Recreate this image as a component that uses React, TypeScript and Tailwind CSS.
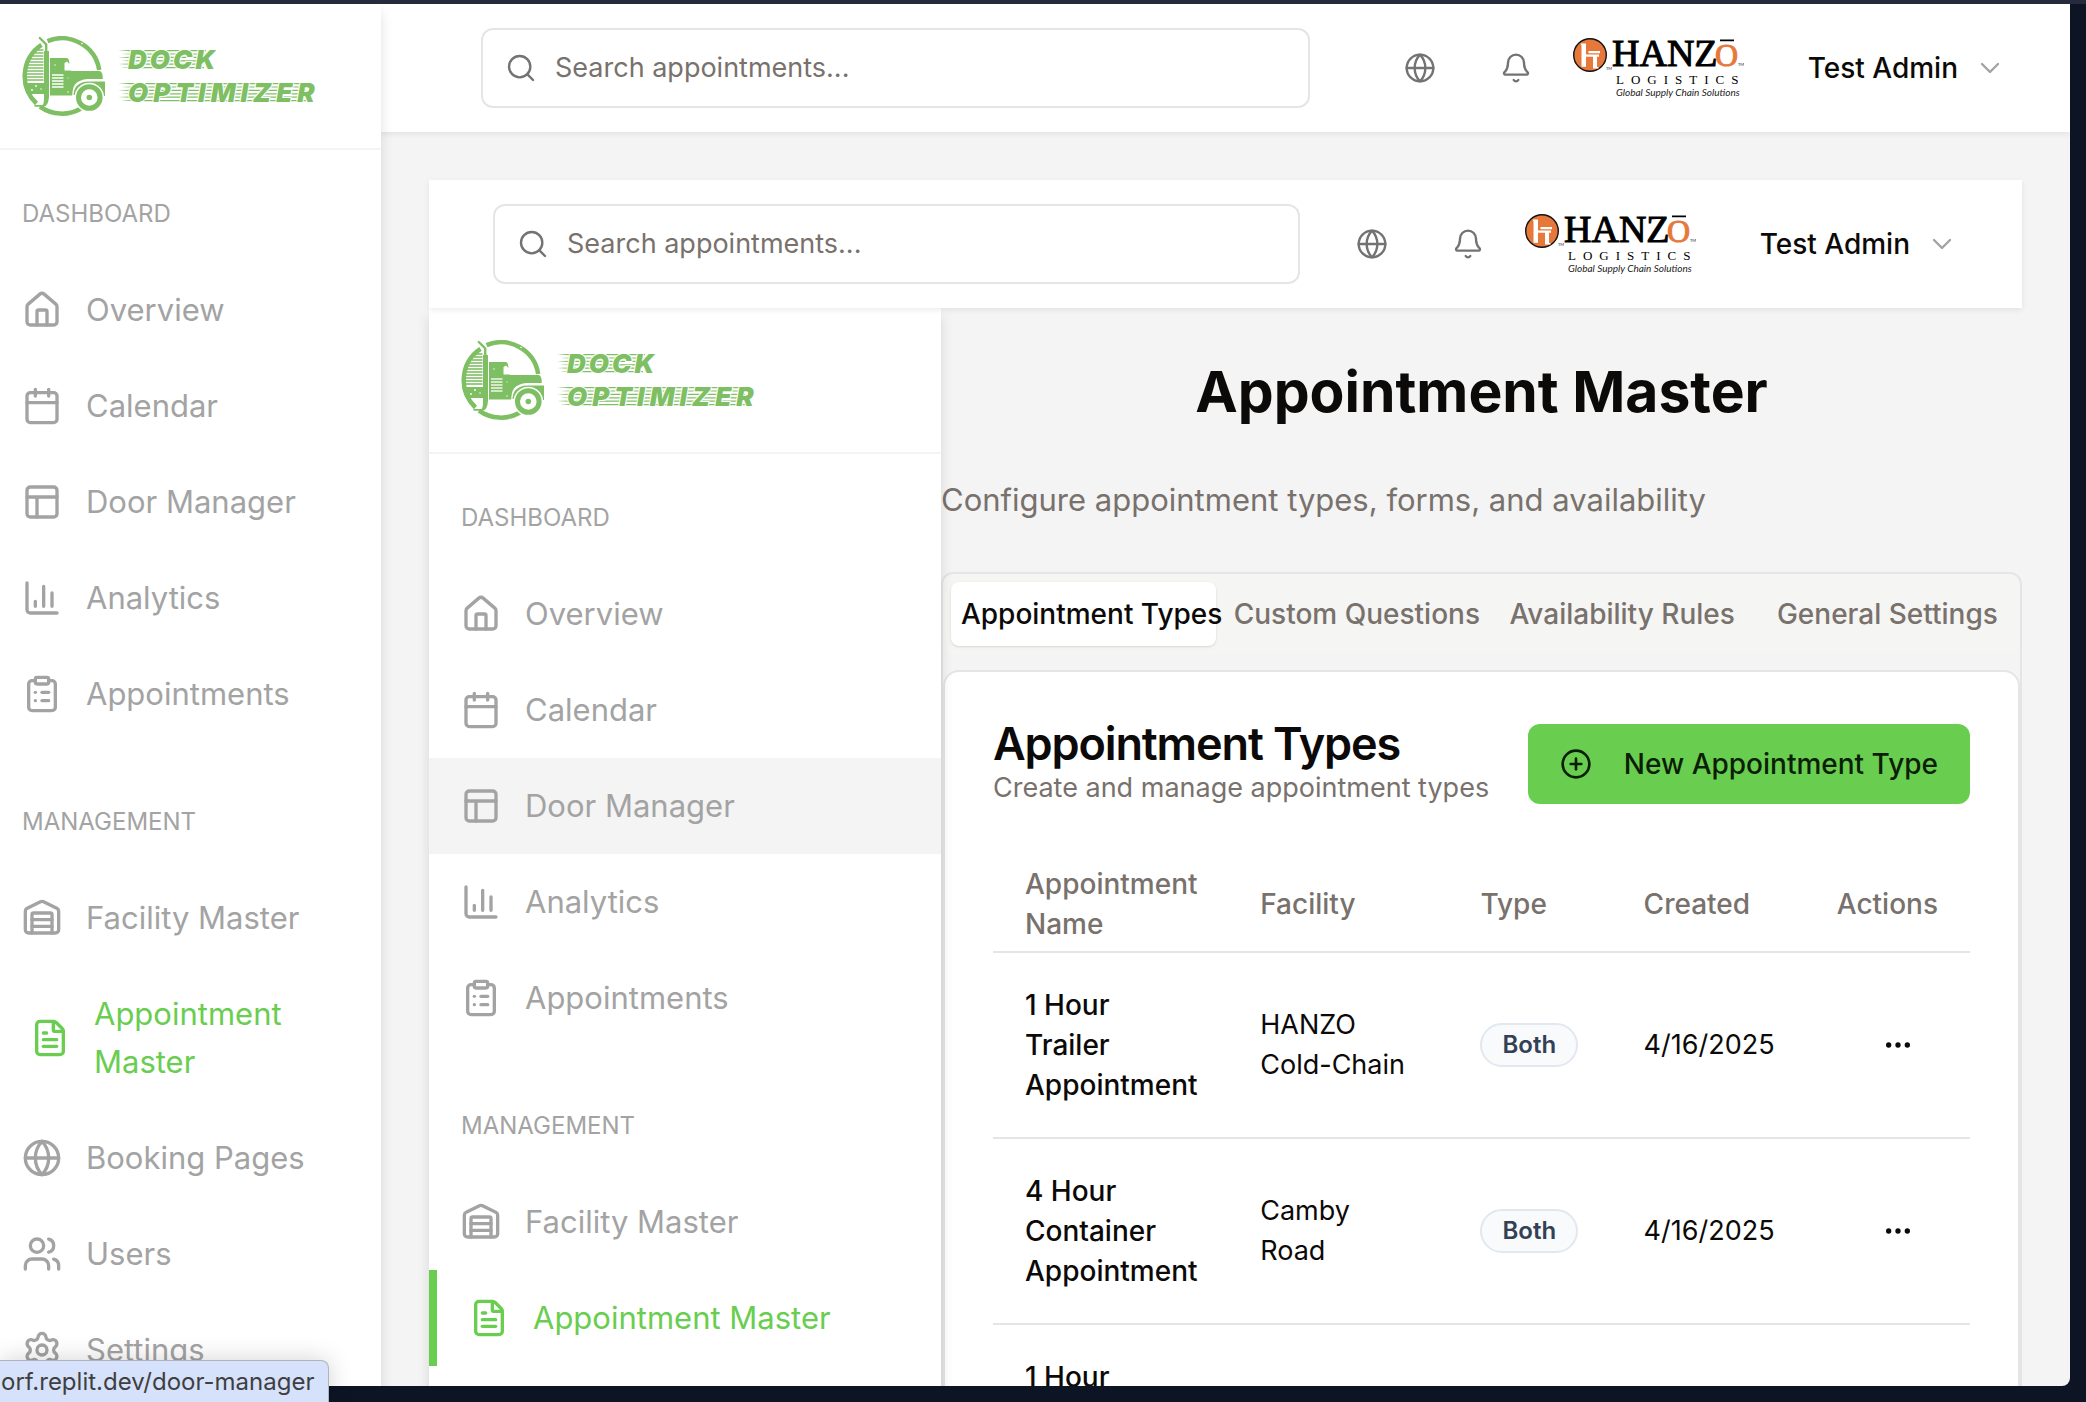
import React from "react";
import {
  Bell,
  ChevronDown,
  CirclePlus,
  ClipboardList,
  Ellipsis,
  FileText,
  Globe,
  Search,
  Settings,
  Users,
  Warehouse,
  type LucideIcon,
} from "lucide-react";

type IconProps = { className?: string };

const strokeProps = {
  viewBox: "0 0 24 24",
  fill: "none",
  stroke: "currentColor",
  strokeWidth: 2,
  strokeLinecap: "round" as const,
  strokeLinejoin: "round" as const,
  "aria-hidden": true,
};

function HomeIcon({ className }: IconProps) {
  return (
    <svg {...strokeProps} className={className}>
      <path d="M15 21v-8a1 1 0 0 0-1-1h-4a1 1 0 0 0-1 1v8" />
      <path d="M3 10a2 2 0 0 1 .709-1.528l7-5.999a2 2 0 0 1 2.582 0l7 5.999A2 2 0 0 1 21 10v9a2 2 0 0 1-2 2H5a2 2 0 0 1-2-2z" />
    </svg>
  );
}

function CalendarIcon({ className }: IconProps) {
  return (
    <svg {...strokeProps} className={className}>
      <path d="M8 2v4M16 2v4M3 10h18" />
      <rect x="3" y="4" width="18" height="18" rx="2" />
    </svg>
  );
}

function LayoutIcon({ className }: IconProps) {
  return (
    <svg {...strokeProps} className={className}>
      <rect x="3" y="3" width="18" height="18" rx="2" />
      <path d="M3 9h18M9 21V9" />
    </svg>
  );
}

function AnalyticsIcon({ className }: IconProps) {
  return (
    <svg {...strokeProps} className={className}>
      <path d="M3 3v16a2 2 0 0 0 2 2h16M18 17V9M13 17V5M8 17v-3" />
    </svg>
  );
}

const stripeRows = [14, 17, 20, 23, 26, 29, 32, 35, 38, 41, 44];
const ventRows = [39, 42, 45, 48, 51];

function SpeedLines({ x, y, width }: { x: number; y: number; width: number }) {
  return (
    <g fill="#7fbf63">
      {[0, 1, 2, 3, 4, 5].map((i) => (
        <path
          key={i}
          d={`M${x + (i % 2) * 3} ${y + i * 3.4 + 0.5} l12 -.5 h${width - i - 12} v1.2 h-${width - i - 12} z`}
        />
      ))}
    </g>
  );
}

function DockLogo() {
  return (
    <svg
      viewBox="0 0 296 80"
      role="img"
      aria-label="Dock Optimizer"
      className="h-20 w-[296px] shrink-0"
    >
      <g fill="none" stroke="#7fbf63" strokeWidth="4.5">
        <path d="M25.5 5.2A37.7 37.7 0 0 1 77.2 34" />
        <path d="M19.5 8.8A37.7 37.7 0 0 0 14.5 67.5" />
        <path d="M18 70.6A37.7 37.7 0 0 0 59 72.5" />
      </g>
      <g stroke="#7fbf63" strokeWidth="1.6">
        {stripeRows.map((y) => (
          <path key={y} d={`M${Math.max(4, 15 - (y - 14) * 0.7)} ${y}H21.5`} />
        ))}
      </g>
      <path d="M3 47h23v11H7z" fill="#7fbf63" />
      <path
        d="M17.8 2l6.4 6.4V16"
        fill="none"
        stroke="#7fbf63"
        strokeWidth="2.4"
        strokeLinecap="round"
      />
      <path d="M22 15h5v46q-.6 9-5.500 9.800H12.500v-1.800h8Q22 68 22 61z" fill="#7fbf63" />
      <path
        d="M28 22h17q2 0 2.500 6l-2.500-2.500-2.500 1.500V34.500H49V35h29q2.800 1 2.800 8H66q-9 .5-13 5.500-2.500 3.500-2.800 11H28z"
        fill="#7fbf63"
      />
      <path
        d="M51.500 59q.5-13 15-13.500H83V60h-1.600q-1.400-11.500-14-11.700-12 .7-13.400 10.700z"
        fill="#7fbf63"
      />
      <g stroke="#fff" strokeWidth="1.300">
        {ventRows.map((y) => (
          <path key={y} d={`M30 ${y}H41.500`} />
        ))}
      </g>
      <circle cx="67.300" cy="61.500" r="14.800" fill="#fff" />
      <circle cx="67.300" cy="61.500" r="10.800" fill="none" stroke="#7fbf63" strokeWidth="5" />
      <circle cx="67.300" cy="61.500" r="2.800" fill="#7fbf63" />
      <g fill="#fff">
        <circle cx="14" cy="50" r=".9" />
        <circle cx="10" cy="54" r=".9" />
        <circle cx="19" cy="53" r=".7" />
        <circle cx="33" cy="29" r=".7" />
        <circle cx="46" cy="42" r=".6" />
        <circle cx="60" cy="7.500" r=".8" />
        <circle cx="46" cy="56" r=".7" />
      </g>
      <SpeedLines x={96} y={14} width={88} />
      <SpeedLines x={96} y={47} width={190} />
      <g
        fontFamily="Inter, sans-serif"
        fontSize="26"
        fontWeight="900"
        fontStyle="italic"
        fill="#7fbf63"
        stroke="#fff"
        strokeWidth="2"
        paintOrder="stroke"
      >
        <text x="106" y="33" letterSpacing="3">DOCK</text>
        <text x="106" y="66" letterSpacing="5">OPTIMIZER</text>
      </g>
    </svg>
  );
}

function HanzoLogo() {
  return (
    <svg
      viewBox="0 0 176 64"
      role="img"
      aria-label="Hanzo Logistics, Global Supply Chain Solutions"
      className="h-16 w-44 shrink-0"
    >
      <circle cx="18" cy="19" r="16.300" fill="#e5783a" stroke="#111" strokeWidth="1.400" />
      <path d="M8.500 7.500h5.500v11h13v2.200h-2V31h1.500v1.500h-5.500V20.700H14v10H9.500V9.500z" fill="#fff" />
      <path d="M16.500 15h11.500v2.200H16.500z" fill="#fff" />
      <g fontFamily="'Liberation Serif', serif">
        <text x="40" y="30" fontSize="38" fill="#000" stroke="#000" strokeWidth="1">
          HANZ
        </text>
        <text x="143" y="30" fontSize="32" fill="#e5783a" stroke="#e5783a" strokeWidth="1">
          O
        </text>
        <text x="44" y="48" fontSize="13" letterSpacing="7" fill="#000">
          LOGISTICS
        </text>
      </g>
      <path d="M148 3.500h14v1.800h-14z" fill="#000" />
      <g fontFamily="Lato, sans-serif" fill="#222">
        <text x="44" y="60" fontSize="10" fontStyle="italic">
          Global Supply Chain Solutions
        </text>
        <text x="34" y="34" fontSize="4">TM</text>
        <text x="166" y="30" fontSize="4">TM</text>
      </g>
    </svg>
  );
}

type NavItem = {
  label: string;
  icon: LucideIcon | ((p: IconProps) => React.ReactElement);
  active?: boolean;
};

const dashboardItems: NavItem[] = [
  { label: "Overview", icon: HomeIcon },
  { label: "Calendar", icon: CalendarIcon },
  { label: "Door Manager", icon: LayoutIcon },
  { label: "Analytics", icon: AnalyticsIcon },
  { label: "Appointments", icon: ClipboardList },
];

const managementItems: NavItem[] = [
  { label: "Facility Master", icon: Warehouse },
  { label: "Appointment Master", icon: FileText, active: true },
  { label: "Booking Pages", icon: Globe },
  { label: "Users", icon: Users },
  { label: "Settings", icon: Settings },
];

function NavSection({
  title,
  items,
  inset,
  hovered,
}: {
  title: string;
  items: NavItem[];
  inset: boolean;
  hovered?: string;
}) {
  const pad = inset ? "pl-8" : "pl-[22px]";
  return (
    <section className="mb-12">
      <h2 className={`${pad} py-4 text-2xl leading-8 text-[#a3a3a3]`}>{title}</h2>
      <ul className="mt-4">
        {items.map(({ label, icon: Icon, active }) => (
          <li key={label}>
            <a
              href="#"
              className={`flex min-h-24 items-center gap-6 py-6 pr-8 text-[31px] leading-[48px] ${pad} ${
                active
                  ? inset
                    ? "border-l-8 border-[#69cd50] text-[#69cd50]"
                    : "ml-2 text-[#69cd50]"
                  : "text-[#a3a3a3]"
              } ${hovered === label ? "bg-[#f4f4f4]" : ""}`}
            >
              <Icon className="size-10 shrink-0" />
              <span>{label}</span>
            </a>
          </li>
        ))}
      </ul>
    </section>
  );
}

function Sidebar({ inset = false, hovered }: { inset?: boolean; hovered?: string }) {
  return (
    <aside
      className={`relative z-10 shrink-0 bg-white shadow-[0_8px_12px_rgba(0,0,0,0.12)] ${
        inset ? "w-[512px]" : "w-[381px]"
      }`}
    >
      <div
        className={`flex items-center border-b-2 border-[#f4f4f4] py-8 ${
          inset ? "pl-8" : "pl-[22px]"
        }`}
      >
        <DockLogo />
      </div>
      <nav aria-label={inset ? "Page" : "Main"} className="pt-8">
        <NavSection title="DASHBOARD" items={dashboardItems} inset={inset} hovered={hovered} />
        <NavSection title="MANAGEMENT" items={managementItems} inset={inset} />
      </nav>
    </aside>
  );
}

function TopBar({ inset = false }: { inset?: boolean }) {
  return (
    <header
      className={`relative flex items-center bg-white py-6 pr-16 shadow-[0_2px_6px_rgba(0,0,0,0.08)] ${
        inset ? "z-20 pl-16" : "pl-[100px]"
      }`}
    >
      <label
        className={`flex h-20 flex-1 items-center gap-[18px] rounded-xl border-2 border-[#e5e5e5] pl-[22px] text-[#737373] ${
          inset ? "mr-8" : "mr-[70px]"
        }`}
      >
        <Search className="size-8" strokeWidth={1.8} />
        <input
          type="search"
          aria-label="Search appointments"
          placeholder="Search appointments..."
          className="min-w-0 flex-1 bg-transparent text-[27px] leading-10 outline-none placeholder:text-[#78716c]"
        />
      </label>
      <div className="flex items-center">
        <button aria-label="Language" className="grid size-20 place-items-center text-[#737373]">
          <Globe className="size-8" strokeWidth={1.8} />
        </button>
        <button aria-label="Notifications" className="ml-4 grid size-20 place-items-center text-[#737373]">
          <Bell className="size-8" strokeWidth={1.8} />
        </button>
        <div className="ml-4">
          <HanzoLogo />
        </div>
        <button className="ml-[60px] flex items-center gap-4 text-[28px] leading-10 font-medium text-[#0c0a09]">
          Test Admin
          <ChevronDown className="size-8 text-[#a3a3a3]" strokeWidth={1.8} />
        </button>
      </div>
    </header>
  );
}

const tabs = ["Appointment Types", "Custom Questions", "Availability Rules", "General Settings"];

const rows = [
  { name: "1 Hour Trailer Appointment", facility: "HANZO Cold-Chain", type: "Both", created: "4/16/2025" },
  { name: "4 Hour Container Appointment", facility: "Camby Road", type: "Both", created: "4/16/2025" },
  { name: "1 Hour Container Appointment", facility: "Camby Road", type: "Both", created: "4/16/2025" },
];

function AppointmentTable() {
  return (
    <table className="mt-12 w-full table-fixed border-collapse text-left text-[27px] leading-10">
      <colgroup>
        <col className="w-[235px]" />
        <col className="w-[220px]" />
        <col className="w-[163px]" />
        <col className="w-[195px]" />
        <col className="w-[163px]" />
      </colgroup>
      <thead>
        <tr className="h-24 border-b-2 border-[#e5e5e5] text-[28px] text-[#78716c]">
          <th className="px-8 font-medium">Appointment Name</th>
          <th className="px-8 font-medium">Facility</th>
          <th className="px-8 font-medium">Type</th>
          <th className="px-8 font-medium">Created</th>
          <th className="pr-8 text-right font-medium">Actions</th>
        </tr>
      </thead>
      <tbody>
        {rows.map((r, i) => (
          <tr key={i} className="border-b-2 border-[#e5e5e5]">
            <td className="p-8 text-[28px] font-medium">{r.name}</td>
            <td className="p-8">{r.facility}</td>
            <td className="p-8">
              <span className="inline-flex rounded-full border-2 border-[#e2e8f0] bg-[#f8fafc] px-5 py-1 align-middle text-2xl leading-8 font-semibold text-[#334155]">
                {r.type}
              </span>
            </td>
            <td className="py-8 pl-8">{r.created}</td>
            <td className="p-8">
              <button
                aria-label={`Actions for ${r.name}`}
                className="ml-auto grid size-20 place-items-center"
              >
                <Ellipsis className="size-8" />
              </button>
            </td>
          </tr>
        ))}
      </tbody>
    </table>
  );
}

function AppointmentMaster() {
  return (
    <main className="min-w-0 flex-1 pt-12">
      <h1 className="text-center text-[57px] leading-[72px] font-bold">Appointment Master</h1>
      <p className="mt-12 text-[31px] leading-[48px] text-[#78716c]">
        Configure appointment types, forms, and availability
      </p>
      <div className="mt-12 rounded-xl border-2 border-[#e5e5e5]">
        <div role="tablist" className="flex h-20 rounded-xl bg-[#f5f5f4] p-2">
          {tabs.map((tab, i) => (
            <button
              key={tab}
              role="tab"
              aria-selected={i === 0}
              className={`flex w-0 flex-1 items-center justify-center rounded-lg pl-4 text-[28px] leading-10 font-medium whitespace-nowrap ${
                i === 0 ? "bg-white text-[#0c0a09] shadow-sm" : "text-[#78716c]"
              }`}
            >
              {tab}
            </button>
          ))}
        </div>
        <section className="mt-4 rounded-2xl border-2 border-[#e5e5e5] bg-white p-12">
          <div className="flex items-center justify-between">
            <div>
              <h2 className="text-[45px] leading-[48px] font-semibold tracking-tight">Appointment Types</h2>
              <p className="text-[27px] leading-10 text-[#78716c]">
                Create and manage appointment types
              </p>
            </div>
            <button className="flex h-20 items-center gap-8 rounded-xl bg-[#69cd50] px-8 text-[28px] leading-10 font-medium whitespace-nowrap text-[#0b1f05]">
              <CirclePlus className="size-8" />
              New Appointment Type
            </button>
          </div>
          <AppointmentTable />
        </section>
      </div>
    </main>
  );
}

export default function App() {
  return (
    <div className="relative h-screen overflow-hidden border-t-4 border-[#252a3c] bg-[#0d1424] pr-4 pb-4 font-['Inter',sans-serif] text-[#0c0a09]">
      <div className="flex h-full overflow-hidden rounded-br-lg bg-[#f4f4f4]">
        <Sidebar />
        <div className="flex min-w-0 flex-1 flex-col">
          <TopBar />
          <div className="p-12">
            <TopBar inset />
            <div className="flex">
              <Sidebar inset hovered="Door Manager" />
              <AppointmentMaster />
            </div>
          </div>
        </div>
      </div>
      <div className="absolute bottom-0 left-0 z-30 rounded-tr-lg border-t border-r border-[#b0b4be] bg-[#d6e1fb] pt-px pr-[14px] pl-px text-2xl leading-10 text-[#3f3f3f] shadow-[0_0_24px_rgba(0,0,0,0.18)]">
        orf.replit.dev/door-manager
      </div>
    </div>
  );
}
